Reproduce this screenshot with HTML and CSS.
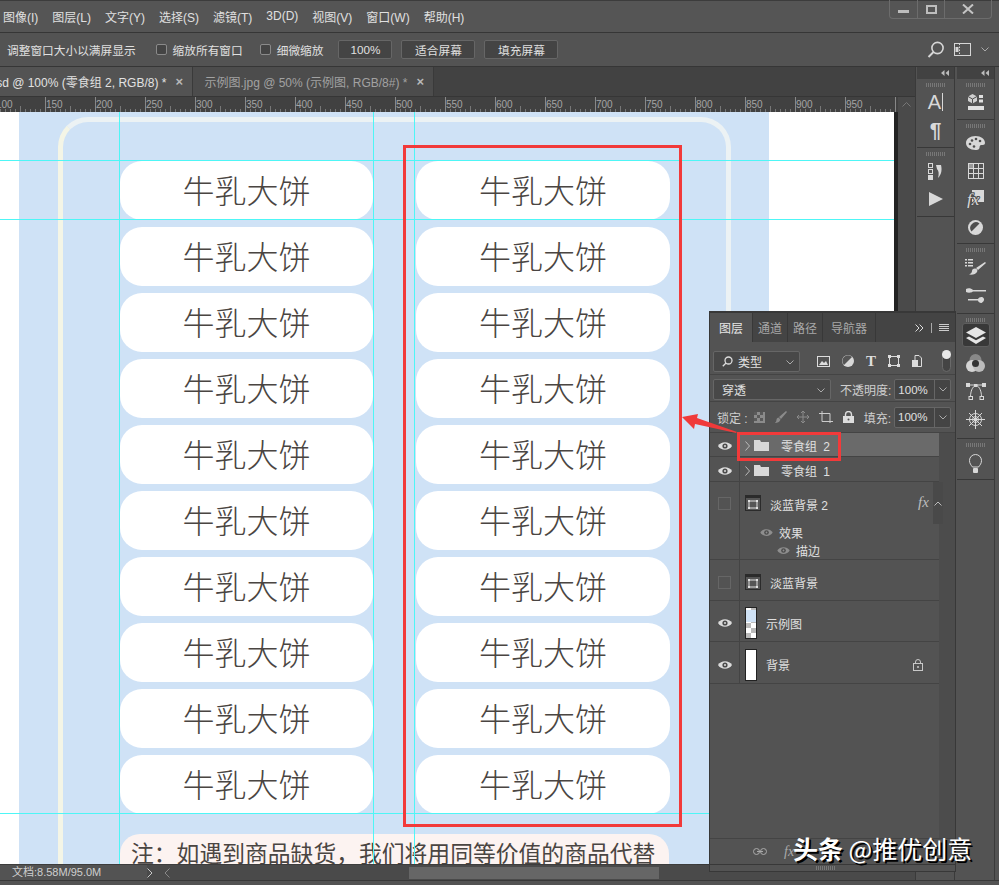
FILE: index.html
```html
<!DOCTYPE html>
<html lang="zh-CN">
<head>
    <meta charset="UTF-8">
    <title>Photoshop</title>
    <link rel="stylesheet" href="styles.css">
</head>
<body>
<div class="app">
    <!-- Menu bar -->
    <div class="menubar">
        <nav class="menu">
            <span>图像(I)</span><span>图层(L)</span><span>文字(Y)</span><span>选择(S)</span><span>滤镜(T)</span><span>3D(D)</span><span>视图(V)</span><span>窗口(W)</span><span>帮助(H)</span>
        </nav>
        <div class="win-btns">
            <div class="win-btn win-min"><i></i></div>
            <div class="win-btn win-max"><i></i></div>
            <div class="win-btn win-close">
                <svg width="12" height="10" viewBox="0 0 12 10"><path d="M1 0.5 11 9.5M11 0.5 1 9.5" stroke="#c4c4c4" stroke-width="2"/></svg>
            </div>
        </div>
    </div>

    <!-- Options bar -->
    <div class="options">
        <label class="opt-check opt-first">调整窗口大小以满屏显示</label>
        <label class="opt-check opt-second"><i class="box"></i>缩放所有窗口</label>
        <label class="opt-check opt-third"><i class="box"></i>细微缩放</label>
        <div class="opt-btn opt-zoom">100%</div>
        <div class="opt-btn">适合屏幕</div>
        <div class="opt-btn">填充屏幕</div>
        <div class="opt-right">
            <svg width="18" height="18" viewBox="0 0 18 18" fill="none" stroke="#d6d6d6" stroke-width="1.6"><circle cx="10.5" cy="7" r="5.6"/><path d="M6.5 11 1.5 16" stroke-width="2"/></svg>
            <svg width="17" height="13" viewBox="0 0 17 13" fill="none" stroke="#d6d6d6"><rect x="0.5" y="0.5" width="16" height="12"/><path d="M5.5 0.5v12" stroke-dasharray="1.5 1.5"/><rect x="1.5" y="4" width="3" height="5" fill="#d6d6d6" stroke="none"/></svg>
            <svg width="8" height="5" viewBox="0 0 8 5" fill="none" stroke="#aaa"><path d="M0.5 0.5 4 4 7.5 0.5"/></svg>
        </div>
    </div>

    <div class="work">
        <!-- Document area -->
        <div class="doc">
            <div class="tabs">
                <div class="tab tab-active"><span class="tab-name">sd @ 100% (零食组 2, RGB/8) *</span><b>×</b></div>
                <div class="tab"><span class="tab-name">示例图.jpg @ 50% (示例图, RGB/8#) *</span><b>×</b></div>
            </div>
            <div class="ruler">
                <div class="ruler-scale">
                    <span>100</span><span>150</span><span>200</span><span>250</span><span>300</span><span>350</span><span>400</span><span>450</span><span>500</span><span>550</span><span>600</span><span>650</span><span>700</span><span>750</span><span>800</span><span>850</span><span>900</span><span>950</span>
                </div>
                <div class="ruler-corner">
                    <svg width="9" height="5" viewBox="0 0 9 5" fill="none" stroke="#777"><path d="M0.5 4.5 4.5 0.5 8.5 4.5"/></svg>
                </div>
            </div>
            <div class="stage">
                <div class="paper">
                    <div class="artboard">
                        <div class="frame">
                            <div class="grid">
                                <div class="card">牛乳大饼</div><div class="card">牛乳大饼</div>
                                <div class="card">牛乳大饼</div><div class="card">牛乳大饼</div>
                                <div class="card">牛乳大饼</div><div class="card">牛乳大饼</div>
                                <div class="card">牛乳大饼</div><div class="card">牛乳大饼</div>
                                <div class="card">牛乳大饼</div><div class="card">牛乳大饼</div>
                                <div class="card">牛乳大饼</div><div class="card">牛乳大饼</div>
                                <div class="card">牛乳大饼</div><div class="card">牛乳大饼</div>
                                <div class="card">牛乳大饼</div><div class="card">牛乳大饼</div>
                                <div class="card">牛乳大饼</div><div class="card">牛乳大饼</div>
                                <div class="card">牛乳大饼</div><div class="card">牛乳大饼</div>
                            </div>
                            <div class="note">注：如遇到商品缺货，我们将用同等价值的商品代替</div>
                        </div>
                    </div>
                    <!-- Guides -->
                    <i class="guide guide-h g-160"></i>
                    <i class="guide guide-h g-219"></i>
                    <i class="guide guide-h g-813"></i>
                    <i class="guide guide-v g-119"></i>
                    <i class="guide guide-v g-373"></i>
                    <i class="guide guide-v g-414"></i>
                </div>
                <div class="paper-edge"></div>
                <div class="vscroll"></div>
            </div>
            <div class="status">
                <div class="status-info">文档:8.58M/95.0M</div>
                <svg class="status-arrow" width="6" height="10" viewBox="0 0 6 10" fill="none" stroke="#c8c8c8"><path d="M0.5 0.5 5 5 0.5 9.5"/></svg>
                <div class="hscroll">
                    <svg width="6" height="10" viewBox="0 0 6 10" fill="none" stroke="#888"><path d="M5.5 0.5 1 5 5.5 9.5"/></svg>
                    <div class="hthumb"></div>
                </div>
            </div>
        </div>

        <!-- Right docks -->
        <div class="dock">
            <div class="dock-col">
                <div class="dock-head"><svg width="8" height="6" viewBox="0 0 8 6" fill="#bbb"><path d="M3.5 0v6L0 3zM8 0v6L4.5 3z"/></svg></div>
                <div class="dock-group dg-68">
                    <div class="grip"></div>
                    <div class="dock-icon di-a"><span class="glyph-a">A</span><i class="a-bar"></i></div>
                    <div class="dock-icon di-para">¶</div>
                </div>
                <div class="dock-group dg-68">
                    <div class="grip"></div>
                    <div class="dock-icon">
                        <svg width="16" height="17" viewBox="0 0 16 17" fill="none" stroke="#d8d8d8"><rect x="0.5" y="0.5" width="4" height="4"/><rect x="0.5" y="6.5" width="4" height="4"/><rect x="0" y="12" width="5" height="5" fill="#d8d8d8" stroke="none"/><path d="M8 2h5c1 4 1 9-3 13 1-4 1-7-1-9z" fill="#d8d8d8" stroke="none"/></svg>
                    </div>
                    <div class="dock-icon">
                        <svg width="14" height="14" viewBox="0 0 14 14" fill="#d8d8d8"><path d="M0 0 14 7 0 14z"/></svg>
                    </div>
                </div>
            </div>
            <div class="dock-col">
                <div class="dock-head"><svg width="8" height="6" viewBox="0 0 8 6" fill="#bbb"><path d="M3.5 0v6L0 3zM8 0v6L4.5 3z"/></svg></div>
                <div class="dock-group dg-40">
                    <div class="grip"></div>
                    <svg class="single" width="16" height="16" viewBox="0 0 16 16"><path d="M4.500 0 9 2.500V7L4.500 9.500 0 7V2.500z" fill="#d0d0d0"/><path d="M0 2.500 4.500 5 9 2.500M4.500 5v4.500" stroke="#4e4e4e" fill="none"/><rect x="11" y="1" width="4" height="3" fill="#e0e0e0"/><rect x="11" y="5.500" width="4" height="3" fill="#e0e0e0"/><rect x="0" y="12" width="16" height="4" fill="#e0e0e0"/></svg>
                </div>
                <div class="dock-group dg-124">
                    <div class="grip"></div>
                    <div class="dock-icon">
                        <svg width="19" height="14" viewBox="0 0 19 14"><path d="M9.500 0C15 0 19 3 19 7c0 2-2 2-3.500 2-2 0-2 2-2 3-.5 2-3 2-4 2C4 14 0 11 0 7c0-4 4-7 9.500-7z" fill="#d8d8d8"/><circle cx="4" cy="8" r="1.300" fill="#4e4e4e"/><circle cx="6" cy="4.500" r="1.300" fill="#4e4e4e"/><circle cx="10" cy="3" r="1.300" fill="#4e4e4e"/><circle cx="14" cy="5" r="1.300" fill="#4e4e4e"/><circle cx="8" cy="10.500" r="1.300" fill="#4e4e4e"/></svg>
                    </div>
                    <div class="dock-icon">
                        <svg width="16" height="16" viewBox="0 0 16 16" fill="none" stroke="#d8d8d8"><rect x="0.500" y="0.500" width="15" height="15"/><path d="M5.500 0v16M10.500 0v16M0 5.500h16M0 10.500h16"/><rect x="1" y="1" width="4" height="4" fill="#999" stroke="none"/></svg>
                    </div>
                    <div class="dock-icon">
                        <svg width="17" height="18" viewBox="0 0 17 18"><rect x="5" y="0" width="12" height="12" fill="#d8d8d8"/><text class="fx-glyph" x="0" y="15">fx</text></svg>
                    </div>
                    <div class="dock-icon">
                        <svg width="15" height="15" viewBox="0 0 15 15"><circle cx="7.500" cy="7.500" r="7.500" fill="#d8d8d8"/><path d="M11.500 3.500a5.700 5.700 0 0 0-8 8z" fill="#4e4e4e"/></svg>
                    </div>
                </div>
                <div class="dock-group dg-70">
                    <div class="grip"></div>
                    <div class="dock-icon">
                        <svg width="21" height="16" viewBox="0 0 21 16" fill="#d8d8d8"><path d="M0 0h2v1.500H0zM3 0h5v1.500H3zM0 3h2v1.500H0zM3 3h5v1.500H3zM0 6h2v1.500H0zM3 6h5v1.500H3zM20 3l1 1-8 7-2-2z"/><path d="M10 9.500c2 0 3 2 2 3.500-1 2-4 3-8 2.500 2-1 3-2 3-3.500 0-1.500 1-2.500 3-2.500z"/></svg>
                    </div>
                    <div class="dock-icon">
                        <svg width="20" height="15" viewBox="0 0 20 15" fill="#d8d8d8"><path d="M0 1c2-1 5-1 7 1h13v1.500H7C5 5 2 5 0 4z"/><path d="M2 11h10c1-2 5-3 6 0 .5 2-2 4-3 4-1 0-3-1-3-2.500H2z"/></svg>
                    </div>
                </div>
                <div class="dock-group dg-124b">
                    <div class="grip"></div>
                    <div class="dock-icon di-active">
                        <svg width="20" height="17" viewBox="0 0 20 17" fill="#e6e6e6"><path d="M10 0 20 5.500 10 11 0 5.500z"/><path d="M3 9.500 10 13.200 17 9.500 20 11 10 17 0 11z"/></svg>
                    </div>
                    <div class="dock-icon">
                        <svg width="19" height="18" viewBox="0 0 19 18"><circle cx="9.500" cy="6" r="6" fill="#888"/><circle cx="6" cy="12" r="6" fill="#d4d4d4"/><circle cx="13" cy="12" r="6" fill="#bcbcbc"/><circle cx="9.500" cy="9.500" r="3.500" fill="#333"/></svg>
                    </div>
                    <div class="dock-icon">
                        <svg width="20" height="17" viewBox="0 0 20 17" fill="none" stroke="#d8d8d8"><path d="M2 2h16M4.500 14C4.500 6 8 2.500 10 2.500S15.500 6 15.500 14"/><rect x="0" y="0" width="4" height="4" fill="#d8d8d8" stroke="none"/><rect x="16" y="0" width="4" height="4" fill="#d8d8d8" stroke="none"/><rect x="8" y="1" width="3.500" height="3" fill="#d8d8d8" stroke="none"/><rect x="3" y="13.500" width="3.500" height="3"/><rect x="14" y="13.500" width="3.500" height="3"/></svg>
                    </div>
                    <div class="dock-icon">
                        <svg width="19" height="19" viewBox="0 0 19 19" fill="none" stroke="#d8d8d8"><path d="M9.500 0v19M0 9.500h19M3 3l13 13M16 3 3 16"/><circle cx="9.500" cy="9.500" r="3"/><circle cx="9.500" cy="9.500" r="6"/></svg>
                    </div>
                </div>
                <div class="dock-group dg-40">
                    <div class="grip"></div>
                    <svg class="single" width="13" height="20" viewBox="0 0 13 20"><path d="M3.500 13C2 11 .5 9.500.5 6.500a6 6 0 0 1 12 0c0 3-1.500 4.500-3 6.500z" fill="none" stroke="#d8d8d8"/><rect x="4" y="14" width="5" height="5" rx="1" fill="#d8d8d8"/></svg>
                </div>
            </div>
        </div>
    </div>
    <div class="bottom-edge"></div>

    <!-- Floating layers panel -->
    <div class="panel">
        <div class="panel-tabs">
            <div class="ptab ptab-active">图层</div>
            <div class="ptab">通道</div>
            <div class="ptab">路径</div>
            <div class="ptab">导航器</div>
            <div class="ptab-tools">
                <svg width="9" height="8" viewBox="0 0 9 8" fill="none" stroke="#ddd"><path d="M.5.500 4 4 .5 7.500M4.500.5 8 4 4.500 7.500"/></svg>
                <i class="ptab-sep"></i>
                <svg width="10" height="8" viewBox="0 0 10 8" stroke="#ccc"><path d="M0 .5h10M0 2.500h10M0 4.500h10M0 6.500h10"/></svg>
            </div>
        </div>
        <div class="prow prow-filter">
            <div class="select select-kind">
                <svg width="11" height="11" viewBox="0 0 11 11" fill="none" stroke="#ddd" stroke-width="1.300"><circle cx="6.500" cy="4.500" r="3.500"/><path d="M4 7 .8 10.200"/></svg>
                <span>类型</span>
                <svg class="caret" width="8" height="5" viewBox="0 0 8 5" fill="none" stroke="#aaa"><path d="M.5.500 4 4 7.500.500"/></svg>
            </div>
            <div class="filter-icons">
                <svg width="13" height="11" viewBox="0 0 13 11"><rect x=".5" y=".5" width="12" height="10" fill="none" stroke="#ddd"/><path d="M2 9l3-4 2 2 2-2 2 4z" fill="#ddd"/></svg>
                <svg width="12" height="12" viewBox="0 0 12 12"><circle cx="6" cy="6" r="6" fill="#d8d8d8"/><path d="M10 2a5.500 5.500 0 0 0-8 8z" fill="#555"/></svg>
                <span class="t-icon">T</span>
                <svg width="12" height="12" viewBox="0 0 12 12" fill="#ddd"><path d="M1.500 1.500h9v9h-9z" fill="none" stroke="#ddd"/><path d="M0 0h3v3H0zM9 0h3v3H9zM0 9h3v3H0zM9 9h3v3H9z"/></svg>
                <svg width="10" height="12" viewBox="0 0 10 12"><path d="M3 .5h4l2.500 2.500v8.500H3z" fill="none" stroke="#ddd"/><rect x="0" y="5" width="6" height="7" fill="#ddd"/></svg>
                <div class="toggle"><i></i></div>
            </div>
        </div>
        <div class="prow prow-blend">
            <div class="select select-blend">
                <span>穿透</span>
                <svg class="caret" width="8" height="5" viewBox="0 0 8 5" fill="none" stroke="#aaa"><path d="M.5.500 4 4 7.500.500"/></svg>
            </div>
            <span class="plabel">不透明度:</span>
            <div class="pct"><span>100%</span><i><svg width="8" height="5" viewBox="0 0 8 5" fill="none" stroke="#aaa"><path d="M.5.500 4 4 7.500.500"/></svg></i></div>
        </div>
        <div class="prow prow-lock">
            <span class="plabel plabel-lock">锁定 :</span>
            <div class="lock-icons">
                <svg width="11" height="11" viewBox="0 0 11 11"><rect width="11" height="11" fill="#8b8b8b"/><path d="M0 0h3v3H0zM6 0h3v3H6zM3 3h3v3H3zM0 6h3v3H0zM6 6h3v3H6z" fill="#5a5a5a"/></svg>
                <svg width="12" height="12" viewBox="0 0 12 12" fill="#8b8b8b"><path d="M11 0l1 1-6 7-2-2zM3.500 6.500 5.500 8.500C5 11 2 12 0 12c1-1 1.500-2 1.500-3S2 7 3.500 6.500z"/></svg>
                <svg width="12" height="12" viewBox="0 0 12 12" fill="none" stroke="#8b8b8b"><path d="M6 0v12M0 6h12M4 2l2-2 2 2M4 10l2 2 2-2M2 4 0 6l2 2M10 4l2 2-2 2"/></svg>
                <svg width="14" height="12" viewBox="0 0 14 12" fill="none" stroke="#ccc"><path d="M3 2.500h8v8H3zM0 2.500h3M3 0v2.500M11 10.500h3M11 10.500V12"/></svg>
                <svg width="11" height="12" viewBox="0 0 11 12"><rect x="0" y="5" width="11" height="7" fill="#ddd"/><path d="M2.500 5V3.500a3 3 0 0 1 6 0V5" fill="none" stroke="#ddd" stroke-width="1.400"/><circle cx="5.500" cy="8.500" r="1" fill="#555"/></svg>
            </div>
            <span class="plabel plabel-fill">填充:</span>
            <div class="pct"><span>100%</span><i><svg width="8" height="5" viewBox="0 0 8 5" fill="none" stroke="#aaa"><path d="M.5.500 4 4 7.500.500"/></svg></i></div>
        </div>

        <div class="layers">
            <div class="layer-list">
                <div class="layer h-24">
                    <div class="eye-col"><svg class="eye" width="14" height="10" viewBox="0 0 14 10"><use href="#eye"/></svg></div>
                    <div class="layer-body layer-sel">
                        <svg class="chev" width="5" height="10" viewBox="0 0 5 10" fill="none" stroke="#bbb"><path d="M.5.500 4.500 5 .5 9.500"/></svg>
                        <svg class="folder" width="15" height="11" viewBox="0 0 15 11" fill="#d8d8d8"><path d="M0 0h6l1 2h8v9H0z"/></svg>
                        <span class="name name-group">零食组 2</span>
                    </div>
                </div>
                <div class="layer h-25">
                    <div class="eye-col"><svg class="eye" width="14" height="10" viewBox="0 0 14 10"><use href="#eye"/></svg></div>
                    <div class="layer-body">
                        <svg class="chev" width="5" height="10" viewBox="0 0 5 10" fill="none" stroke="#bbb"><path d="M.5.500 4.500 5 .5 9.500"/></svg>
                        <svg class="folder" width="15" height="11" viewBox="0 0 15 11" fill="#d8d8d8"><path d="M0 0h6l1 2h8v9H0z"/></svg>
                        <span class="name name-group">零食组 1</span>
                    </div>
                </div>
                <div class="layer h-78">
                    <div class="eye-col eye-top"><i class="eye-off"></i></div>
                    <div class="layer-body layer-stack">
                        <div class="layer-line">
                            <svg class="thumb-shape" width="16" height="16" viewBox="0 0 16 16"><use href="#shape"/></svg>
                            <span class="name name-low">淡蓝背景 2</span>
                            <span class="fx">fx</span>
                            <div class="fx-toggle"><svg width="8" height="5" viewBox="0 0 8 5" fill="none" stroke="#bbb"><path d="M.5 4.500 4 1 7.500 4.500"/></svg></div>
                        </div>
                        <div class="effect">
                            <svg class="eye" width="13" height="9" viewBox="0 0 14 10"><use href="#eye-dim"/></svg><span>效果</span>
                        </div>
                        <div class="effect effect-sub">
                            <svg class="eye" width="13" height="9" viewBox="0 0 14 10"><use href="#eye-dim"/></svg><span>描边</span>
                        </div>
                    </div>
                </div>
                <div class="layer h-41">
                    <div class="eye-col"><i class="eye-off"></i></div>
                    <div class="layer-body">
                        <svg class="thumb-shape" width="16" height="16" viewBox="0 0 16 16"><use href="#shape"/></svg>
                        <span class="name">淡蓝背景</span>
                    </div>
                </div>
                <div class="layer h-41">
                    <div class="eye-col"><svg class="eye" width="14" height="10" viewBox="0 0 14 10"><use href="#eye"/></svg></div>
                    <div class="layer-body">
                        <div class="thumb thumb-sample"><i></i></div>
                        <span class="name">示例图</span>
                    </div>
                </div>
                <div class="layer h-42">
                    <div class="eye-col"><svg class="eye" width="14" height="10" viewBox="0 0 14 10"><use href="#eye"/></svg></div>
                    <div class="layer-body">
                        <div class="thumb"></div>
                        <span class="name">背景</span>
                        <svg class="layer-lock" width="10" height="12" viewBox="0 0 10 12" fill="none" stroke="#c8c8c8"><rect x=".5" y="4.500" width="9" height="7"/><path d="M2.500 4.500V3a2.500 2.500 0 0 1 5 0v1.500"/><circle cx="5" cy="8" r="1" fill="#c8c8c8" stroke="none"/></svg>
                    </div>
                </div>
            </div>
            <div class="layer-scroll"></div>
        </div>
        <div class="panel-foot">
            <svg width="14" height="7" viewBox="0 0 14 7" fill="none" stroke="#aaa"><rect x=".5" y=".5" width="6" height="6" rx="3"/><rect x="7.500" y=".5" width="6" height="6" rx="3"/><path d="M4 3.500h6"/></svg>
            <span class="foot-fx">fx</span>
        </div>
        <div class="panel-grip"><div class="grip"></div></div>
    </div>

    <!-- Red annotations -->
    <div class="mark mark-column"></div>
    <div class="mark mark-layer"></div>
    <svg class="mark-arrow" width="56" height="24" viewBox="0 0 56 24"><path d="M0 7 16 4 15 8 55 22 54 23 13 14 12 19z" fill="#f03a3a"/></svg>

    <div class="watermark"><b>头条</b> @推优创意</div>

    <!-- Shared icons -->
    <svg class="defs" width="0" height="0">
        <symbol id="eye" viewBox="0 0 14 10">
            <path d="M0 5C3 0 11 0 14 5 11 10 3 10 0 5z" fill="#dcdcdc"/><circle cx="7" cy="5" r="2.600" fill="#4c4c4c"/><circle cx="7" cy="5" r="1" fill="#dcdcdc"/>
        </symbol>
        <symbol id="eye-dim" viewBox="0 0 14 10">
            <path d="M0 5C3 0 11 0 14 5 11 10 3 10 0 5z" fill="#8e8e8e"/><circle cx="7" cy="5" r="2.600" fill="#4c4c4c"/><circle cx="7" cy="5" r="1" fill="#8e8e8e"/>
        </symbol>
        <symbol id="shape" viewBox="0 0 16 16">
            <rect width="16" height="16" fill="#2b2b2b"/><rect x="1" y="3" width="14" height="12" fill="#555"/><path d="M4 6h8v7H4z" fill="none" stroke="#e0e0e0"/><path d="M3 5h2v2H3zM11 5h2v2h-2zM3 12h2v2H3zM11 12h2v2h-2z" fill="#e0e0e0"/>
        </symbol>
    </svg>
</div>
</body>
</html>
```

FILE: styles.css
```css
* {
    box-sizing: border-box;
}

body {
    margin: 0;
    background: #535353;
    font-family: "Liberation Sans", "Noto Sans CJK SC", sans-serif;
    font-size: 12px;
    color: #e0e0e0;
}

.app {
    position: relative;
    width: 999px;
    height: 885px;
    overflow: hidden;
    display: flex;
    flex-direction: column;
    background: #535353;
}

/* Menu bar */
.menubar {
    height: 33px;
    flex: none;
    display: flex;
    justify-content: space-between;
    background: #555;
    border-top: 1px solid #3c3c3c;
    border-bottom: 1px solid #363636;
}

.menu {
    display: flex;
    align-items: center;
    gap: 14px;
    padding-left: 3px;
    height: 30px;
    white-space: nowrap;
}

.win-btns {
    display: flex;
    height: 19px;
    margin-right: 7px;
    margin-top: -1px;
    border: 1px solid #6c6c6c;
    border-top: 0;
    border-radius: 0 0 4px 4px;
}

.win-btn {
    display: flex;
    align-items: center;
    justify-content: center;
    width: 27px;
    border-left: 1px solid #6c6c6c;
}

.win-btn:first-child {
    border-left: 0;
}

.win-close {
    width: 47px;
}

.win-min i {
    width: 11px;
    height: 3px;
    margin-top: 5px;
    background: #bdbdbd;
}

.win-max i {
    width: 11px;
    height: 9px;
    border: 2px solid #bdbdbd;
}

/* Options bar */
.options {
    height: 34px;
    flex: none;
    display: flex;
    align-items: center;
    padding-left: 7px;
    background: #535353;
    border-bottom: 1px solid #363636;
    font-size: 11.700px;
    white-space: nowrap;
}

.opt-check {
    display: flex;
    align-items: center;
    gap: 6px;
}

.opt-first { margin-right: 20px; }
.opt-second { margin-right: 17px; }
.opt-third { margin-right: 15px; }

.box {
    width: 11px;
    height: 11px;
    border: 1px solid #8a8a8a;
    border-radius: 2px;
    background: #444;
}

.opt-btn {
    display: flex;
    align-items: center;
    justify-content: center;
    width: 74px;
    height: 19px;
    margin-right: 9px;
    background: #444;
    border: 1px solid #666;
    border-radius: 2px;
}

.opt-zoom {
    width: 54px;
}

.opt-right {
    display: flex;
    align-items: center;
    gap: 9px;
    margin-left: auto;
    margin-right: 10px;
}

.opt-right svg:last-child {
    margin-left: 1px;
}

/* Workspace */
.work {
    flex: 1;
    min-height: 0;
    display: flex;
}

.bottom-edge {
    height: 5px;
    flex: none;
    background: #535353;
    border-top: 1px solid #383838;
}

.doc {
    width: 916px;
    flex: none;
    display: flex;
    flex-direction: column;
    border-right: 1px solid #3a3a3a;
}

.tabs {
    height: 29px;
    flex: none;
    display: flex;
    background: #424242;
    white-space: nowrap;
}

.tab {
    width: 241px;
    display: flex;
    align-items: center;
    justify-content: flex-end;
    gap: 9px;
    padding-right: 9px;
    overflow: hidden;
    color: #a2a2a2;
    background: #4c4c4c;
    border-right: 1px solid #3a3a3a;
}

.tab-active {
    width: 193px;
    color: #e2e2e2;
    background: #535353;
}

.tab b {
    font-size: 13px;
    color: #b8b8b8;
}

.tab-name {
    flex: none;
}

.ruler {
    height: 16px;
    flex: none;
    display: flex;
    background: #414141;
    border-top: 1px solid #363636;
}

.ruler-scale {
    flex: 1;
    display: flex;
    overflow: hidden;
    font-size: 10px;
    line-height: 15px;
    color: #a4a4a4;
    background-image:
        linear-gradient(to right, #888 1px, transparent 1px),
        linear-gradient(to right, #777 1px, transparent 1px),
        linear-gradient(to right, #777 1px, transparent 1px);
    background-size: 50px 100%, 25px 6px, 5px 3px;
    background-position: -5px 0, -5px 100%, 0 100%;
    background-repeat: repeat-x;
}

.ruler-scale span {
    flex: none;
    width: 50px;
    padding-left: 1px;
}

.ruler-scale span:first-child {
    width: 45px;
    text-indent: -5px;
}

.ruler-corner {
    width: 17px;
    flex: none;
    display: flex;
    align-items: center;
    justify-content: center;
    background: #4a4a4a;
}

.stage {
    flex: 1;
    min-height: 0;
    display: flex;
    overflow: hidden;
}

.paper {
    position: relative;
    width: 894px;
    flex: none;
    background: #fff;
    padding-left: 19px;
    overflow: hidden;
}

.paper-edge {
    width: 4px;
    flex: none;
    background: #232323;
}

.vscroll {
    flex: 1;
    background: #4a4a4a;
}

.artboard {
    width: 750px;
    height: 900px;
    padding: 5px 38px 0 39px;
    background: #cfe2f6;
}

.frame {
    height: 880px;
    padding: 39px 57px 0;
    border: 5px solid #ecf2f4;
    border-left-color: #f4f5e6;
    border-radius: 30px;
}

.grid {
    display: grid;
    grid-template-columns: 253px 254px;
    grid-auto-rows: 59px;
    column-gap: 43px;
    row-gap: 7px;
}

.card {
    display: flex;
    align-items: center;
    justify-content: center;
    padding-bottom: 3px;
    background: #fff;
    border-radius: 22px;
    font-family: "Noto Sans CJK SC", sans-serif;
    font-size: 32px;
    font-weight: 300;
    color: #4a4542;
}

.note {
    height: 60px;
    margin-top: 20px;
    padding: 0 11px;
    background: #fcf3f1;
    border-radius: 20px;
    font-family: "Noto Sans CJK SC", sans-serif;
    font-size: 22.800px;
    line-height: 38px;
    color: #4a4542;
    white-space: nowrap;
}

.guide {
    position: absolute;
    background: #4ef6f6;
}

.guide-h {
    left: 0;
    right: 0;
    height: 1px;
}

.guide-v {
    top: 0;
    bottom: 0;
    width: 1px;
}

.g-160 { top: 48px; }
.g-219 { top: 107px; }
.g-813 { top: 701px; }
.g-119 { left: 119px; }
.g-373 { left: 373px; }
.g-414 { left: 414px; }

.status {
    height: 16px;
    flex: none;
    display: flex;
    align-items: center;
    background: #4a4a4a;
    border-top: 1px solid #3d3d3d;
}

.status-info {
    width: 147px;
    height: 100%;
    padding-left: 12px;
    background: #535353;
    font-size: 11px;
    line-height: 15px;
    color: #cfcfcf;
}

.status-arrow {
    flex: none;
}

.hscroll {
    flex: 1;
    height: 100%;
    display: flex;
    align-items: center;
    padding-left: 11px;
}

.hthumb {
    width: 250px;
    height: 12px;
    margin-left: 239px;
    background: #666;
}

/* Right docks */
.dock {
    flex: 1;
    display: flex;
    gap: 2px;
    padding-left: 1px;
}

.dock-col {
    width: 38px;
    flex: none;
    display: flex;
    flex-direction: column;
    border-right: 1px solid #3a3a3a;
}

.dock-head {
    height: 12px;
    flex: none;
    display: flex;
    align-items: center;
    justify-content: flex-end;
    padding-right: 5px;
    background: #424242;
}

.dock-group {
    flex: none;
    display: flex;
    flex-direction: column;
    align-items: center;
    border-bottom: 1px solid #383838;
}

.dg-68 { height: 69px; }
.dg-40 { height: 41px; }
.dg-124 { height: 124px; }
.dg-70 { height: 70px; }
.dg-124b { height: 125px; }

.grip {
    width: 20px;
    height: 4px;
    margin-top: 4px;
    flex: none;
    background: repeating-linear-gradient(to right, #777 0 1px, transparent 1px 2px);
}

.dock-icon {
    width: 100%;
    height: 28px;
    flex: none;
    display: flex;
    align-items: center;
    justify-content: center;
    color: #d8d8d8;
}

.single {
    margin-top: 7px;
}

.dock-group .dock-icon:nth-child(2) {
    margin-top: 1px;
}

.glyph-a {
    font-size: 20px;
}

.a-bar {
    width: 1px;
    height: 18px;
    margin-left: 1px;
    background: #d8d8d8;
}

.di-para {
    font-size: 21px;
    font-weight: bold;
}

.dock-group .di-active {
    width: 28px;
    height: 24px;
    margin-top: 3px;
    margin-bottom: 2px;
    background: #383838;
    border: 1px solid #5e5e5e;
    border-radius: 3px;
}

.fx-glyph {
    font-family: "Liberation Serif", serif;
    font-size: 17px;
    font-style: italic;
    fill: #d8d8d8;
    stroke: #4e4e4e;
    stroke-width: 2px;
    paint-order: stroke;
}

/* Layers panel */
.panel {
    position: absolute;
    left: 709px;
    top: 311px;
    width: 247px;
    height: 561px;
    display: flex;
    flex-direction: column;
    background: #535353;
    border: 1px solid #383838;
    border-top-width: 2px;
}

.panel-tabs {
    height: 29px;
    flex: none;
    display: flex;
    background: #444;
    color: #a8a8a8;
}

.ptab {
    display: flex;
    align-items: center;
    justify-content: center;
    width: 35px;
    border-right: 1px solid #383838;
}

.ptab:nth-child(4) {
    width: 53px;
}

.ptab-active {
    width: 43px;
    color: #e6e6e6;
    background: #535353;
}

.ptab-tools {
    flex: 1;
    display: flex;
    align-items: center;
    justify-content: flex-end;
    gap: 7px;
    padding-right: 6px;
}

.ptab-sep {
    width: 1px;
    height: 10px;
    background: #aaa;
}

.prow {
    flex: none;
    display: flex;
    align-items: center;
    padding-left: 3px;
    border-bottom: 1px solid #444;
}

.prow-filter {
    height: 33px;
    padding-top: 6px;
}

.prow-blend {
    height: 27px;
    padding-top: 3px;
}

.prow-lock {
    height: 31px;
}

.select {
    position: relative;
    display: flex;
    align-items: center;
    gap: 5px;
    height: 21px;
    padding-left: 8px;
    background: #484848;
    border: 1px solid #666;
    border-radius: 2px;
}

.select-kind {
    width: 87px;
}

.select-blend {
    width: 118px;
}

.caret {
    position: absolute;
    right: 5px;
    top: 8px;
}

.filter-icons {
    flex: 1;
    display: flex;
    align-items: center;
    gap: 12px;
    padding: 0 4px 0 17px;
}

.t-icon {
    font-family: "Liberation Serif", serif;
    font-size: 15px;
    font-weight: bold;
    color: #ddd;
}

.toggle {
    position: relative;
    width: 9px;
    height: 22px;
    margin-left: auto;
    background: #444;
    border: 1px solid #6a6a6a;
    border-radius: 5px;
}

.toggle i {
    position: absolute;
    left: -1px;
    top: -1px;
    width: 9px;
    height: 9px;
    border-radius: 50%;
    background: #e8e8e8;
}

.plabel {
    margin-left: 9px;
    margin-right: 3px;
    color: #cfcfcf;
    white-space: nowrap;
}

.pct {
    display: flex;
    align-items: center;
    width: 57px;
    height: 21px;
    background: #444;
    border: 1px solid #666;
    border-radius: 2px;
}

.pct span {
    flex: 1;
    padding-left: 3px;
    font-size: 11.500px;
}

.pct i {
    display: flex;
    align-items: center;
    justify-content: center;
    width: 16px;
    height: 100%;
    border-left: 1px solid #666;
}

.plabel-lock {
    margin-left: 4px;
    margin-right: 6px;
}

.lock-icons {
    display: flex;
    align-items: center;
    gap: 10px;
}

.plabel-fill {
    margin-left: 10px;
}

.layers {
    flex: 1;
    min-height: 0;
    display: flex;
}

.layer-list {
    width: 229px;
    flex: none;
}

.layer-scroll {
    flex: 1;
    background: #4c4c4c;
}

.layer {
    display: flex;
    border-bottom: 1px solid #444;
}

.h-24 { height: 24px; }
.h-25 { height: 25px; }
.h-78 { height: 78px; }
.h-41 { height: 41px; }
.h-42 { height: 42px; }

.h-24 > div { padding-top: 2px; }
.h-25 > div { padding-top: 3px; }
.h-41 > div,
.h-42 > div { padding-top: 4px; }

.eye-col {
    width: 30px;
    flex: none;
    display: flex;
    align-items: center;
    justify-content: center;
    border-right: 1px solid #444;
}

.eye-top {
    align-items: flex-start;
    padding-top: 15px;
}

.eye-off {
    width: 13px;
    height: 13px;
    border: 1px solid #666;
}

.layer-body {
    flex: 1;
    min-width: 0;
    display: flex;
    align-items: center;
    padding-left: 5px;
    color: #e0e0e0;
}

.layer-sel {
    background: #6a6a6a;
}

.chev {
    margin-right: 4px;
}

.folder {
    margin-right: 12px;
}

.name-group {
    word-spacing: 3px;
}

.name-low {
    padding-top: 3px;
}

.thumb-shape {
    margin-right: 9px;
}

.thumb {
    width: 12px;
    height: 32px;
    margin-right: 9px;
    flex: none;
    background: #fff;
    border: 1px solid #222;
}

.thumb-sample {
    background: repeating-conic-gradient(#bbb 0 25%, #fff 0 50%) 0 0 / 10px 10px;
}

.thumb-sample i {
    display: block;
    height: 12px;
    margin-top: 2px;
    background: #cfe2f6;
}

.layer-lock {
    margin-left: auto;
    margin-right: 16px;
}

.layer-stack {
    flex-direction: column;
    align-items: stretch;
}

.layer-line {
    position: relative;
    display: flex;
    align-items: center;
    height: 42px;
}

.fx {
    position: absolute;
    left: 173px;
    top: 12px;
    font-family: "Liberation Serif", serif;
    font-size: 15px;
    font-style: italic;
    color: #bdbdbd;
}

.fx-toggle {
    position: absolute;
    left: 188px;
    top: 0;
    width: 10px;
    height: 42px;
    display: flex;
    align-items: center;
    justify-content: center;
    background: #494949;
}

.effect {
    display: flex;
    align-items: center;
    gap: 6px;
    height: 18px;
    padding-left: 15px;
}

.effect-sub {
    padding-left: 32px;
}

.panel-foot {
    height: 26px;
    flex: none;
    display: flex;
    align-items: center;
    gap: 17px;
    padding-left: 43px;
    background: #535353;
    border-top: 1px solid #444;
    color: #aaa;
}

.foot-fx {
    font-family: "Liberation Serif", serif;
    font-style: italic;
    font-size: 14px;
}

.panel-grip {
    height: 7px;
    flex: none;
    display: flex;
    justify-content: center;
    margin-left: -13px;
    border-top: 1px solid #383838;
}

.panel-grip .grip {
    margin-top: 1px;
}

/* Annotations */
.mark {
    position: absolute;
    border: 3px solid #f23a3a;
}

.mark-column {
    left: 403px;
    top: 145px;
    width: 279px;
    height: 682px;
}

.mark-layer {
    left: 737px;
    top: 432px;
    width: 104px;
    height: 29px;
}

.mark-arrow {
    position: absolute;
    left: 682px;
    top: 410px;
}

.watermark {
    position: absolute;
    left: 793px;
    top: 830px;
    font-family: "Noto Sans CJK SC", sans-serif;
    font-size: 25px;
    line-height: 36px;
    color: #fff;
    white-space: nowrap;
    text-shadow: 2px 2px 0 #000;
}

.defs {
    position: absolute;
}
```
